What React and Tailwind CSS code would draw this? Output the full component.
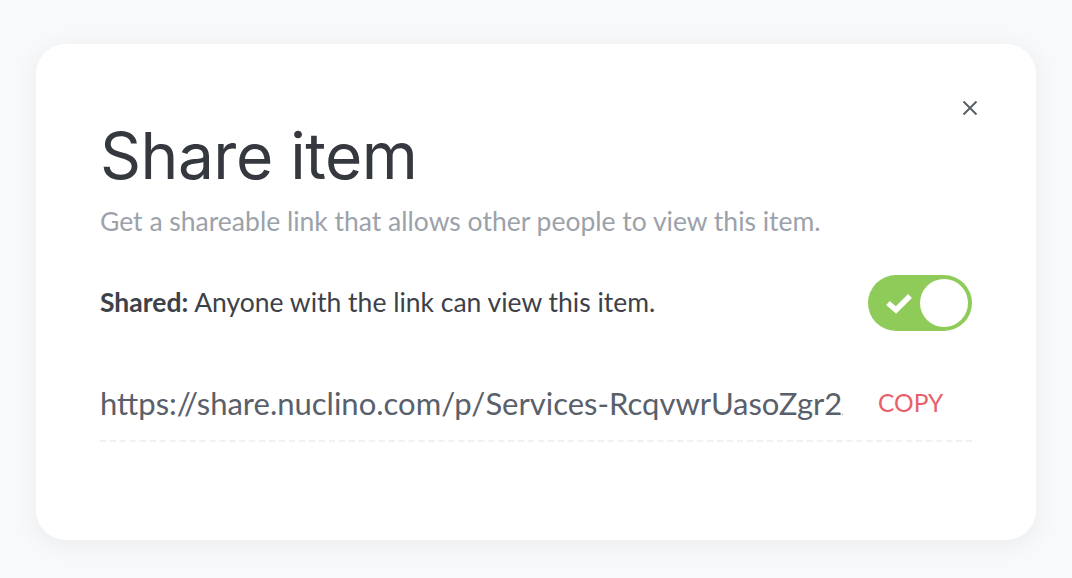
import React from 'react';

function Toggle() {
  return (
    <div className="w-[104px] h-[56px] rounded-full bg-[#8fcb59] flex items-center justify-between pl-[16px] pr-[4px]">
      <svg width="30" height="24" viewBox="0 0 30 24">
        <path d="M4 12 L12 19 L26 5" fill="none" stroke="#fff" strokeWidth="5.5" />
      </svg>
      <div className="w-[48px] h-[48px] rounded-full bg-white" />
    </div>
  );
}

export default function App() {
  return (
    <div className="w-[1072px] h-[578px] bg-[#f8f9fb] overflow-hidden pt-[44px] pl-[36px]" style={{ fontFamily: 'Lato, sans-serif' }}>
      <div className="w-[1000px] h-[496px] bg-white rounded-[30px] shadow-[0_4px_24px_rgba(0,0,0,0.06)] px-[64px] pt-[52px]">
        <div className="flex justify-end h-[24px]">
          <svg width="20" height="20" viewBox="0 0 20 20" className="mr-[-8px] mt-[2px]">
            <path d="M3.5 3.5 L16.5 16.5 M16.5 3.5 L3.5 16.5" stroke="#5b6068" strokeWidth="2" />
          </svg>
        </div>
        <h1 className="text-[64px] leading-[76px] text-[#35393f] mt-[-2px] tracking-[-0.5px]" style={{ fontFamily: 'Inter, sans-serif' }}>Share item</h1>
        <p className="text-[26.5px] text-[#9ba2aa] mt-[11px] leading-[32px]">Get a shareable link that allows other people to view this item.</p>
        <div className="flex items-center justify-between mt-[38px]">
          <p className="text-[26.5px] text-[#3d4148]"><span className="font-bold">Shared:</span> Anyone with the link can view this item.</p>
          <Toggle />
        </div>
        <div className="flex items-center mt-[52px] border-b-2 border-dashed border-[#f0f1f3] pb-[17px]">
          <div className="w-[743px] overflow-hidden whitespace-nowrap text-[31px] text-[#59606b] leading-[40px]">https://share.nuclino.com/p/Services-RcqvwrUasoZgr2AbXkPq</div>
          <div className="ml-[35px] text-[24.5px] text-[#e8606a]">COPY</div>
        </div>
      </div>
    </div>
  );
}
